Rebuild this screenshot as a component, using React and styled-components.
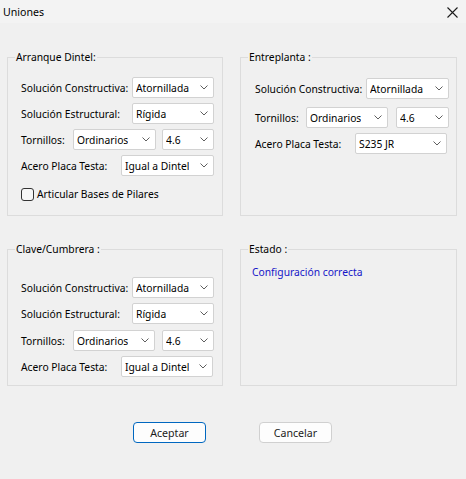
import React from 'react';
import styled, { createGlobalStyle } from 'styled-components';

const GlobalStyle = createGlobalStyle`
    html, body {
        margin: 0;
        padding: 0;
        background: #f0f0f0;
    }
    body {
        font-family: "Noto Sans", "Open Sans", sans-serif;
        font-size: 10.3px;
        color: #000;
    }
`

const App = () => {
    return (<Window>
        <GlobalStyle />
        <TitleBar>
            <Title>Uniones</Title>
            <CloseButton>
                <svg width="11" height="11" viewBox="0 0 11 11">
                    <path d="M0.5 0.5 L10.5 10.5 M10.5 0.5 L0.5 10.5" stroke="#1b1b1b" strokeWidth="1.1" fill="none"/>
                </svg>
            </CloseButton>
        </TitleBar>

        <Body>
            <Group $h={167} $pad={13} $pt={12}>
                <Legend $pad={13}>Arranque Dintel:</Legend>
                <Stack>
                    <Row>
                        <Label $w={111}>Solución Constructiva:</Label>
                        <Combo value="Atornillada" $w={82} />
                    </Row>
                    <Row>
                        <Label $w={111}>Solución Estructural:</Label>
                        <Combo value="Rígida" $w={82} />
                    </Row>
                    <Row>
                        <Label $w={52}>Tornillos:</Label>
                        <Combo value="Ordinarios" $w={83} />
                        <Combo value="4.6" $w={52} $ml={6} />
                    </Row>
                    <Row>
                        <Label $w={100}>Acero Placa Testa:</Label>
                        <Combo value="Igual a Dintel" $w={93} />
                    </Row>
                    <CheckRow>
                        <CheckBox />
                        <span>Articular Bases de Pilares</span>
                    </CheckRow>
                </Stack>
            </Group>

            <Group $h={167} $pad={14} $pt={13}>
                <Legend $pad={14}>Entreplanta :</Legend>
                <Stack>
                    <Row>
                        <Label $w={111}>Solución Constructiva:</Label>
                        <Combo value="Atornillada" $w={83} />
                    </Row>
                    <Row $mt={3}>
                        <Label $w={51}>Tornillos:</Label>
                        <Combo value="Ordinarios" $w={82} />
                        <Combo value="4.6" $w={53} $ml={8} />
                    </Row>
                    <Row>
                        <Label $w={100}>Acero Placa Testa:</Label>
                        <Combo value="S235 JR" $w={92} />
                    </Row>
                </Stack>
            </Group>

            <Group $h={145} $pad={13} $pt={20}>
                <Legend $pad={13}>Clave/Cumbrera :</Legend>
                <Stack>
                    <Row>
                        <Label $w={111}>Solución Constructiva:</Label>
                        <Combo value="Atornillada" $w={82} />
                    </Row>
                    <Row>
                        <Label $w={111}>Solución Estructural:</Label>
                        <Combo value="Rígida" $w={82} />
                    </Row>
                    <Row $mt={1}>
                        <Label $w={52}>Tornillos:</Label>
                        <Combo value="Ordinarios" $w={82} />
                        <Combo value="4.6" $w={52} $ml={7} />
                    </Row>
                    <Row>
                        <Label $w={100}>Acero Placa Testa:</Label>
                        <Combo value="Igual a Dintel" $w={92} />
                    </Row>
                </Stack>
            </Group>

            <Group $h={145} $pad={11} $pt={7}>
                <Legend $pad={11}>Estado :</Legend>
                <Status>Configuración correcta</Status>
            </Group>
        </Body>

        <ButtonBar>
            <Button $primary>Aceptar</Button>
            <Button>Cancelar</Button>
        </ButtonBar>
    </Window>);
}

//combobox look-alike: white box, value on the left, thin chevron on the right
const Combo = ({ value, $w, $ml }) => {
    return (<ComboBox $w={$w} $ml={$ml}>
        <ComboValue>{value}</ComboValue>
        <svg width="8" height="5" viewBox="0 0 8 5">
            <path d="M0.5 0.5 L4 4 L7.5 0.5" stroke="#5f5f5f" strokeWidth="1" fill="none"/>
        </svg>
    </ComboBox>);
}

export default App;

const Window = styled.div`
    width: 466px;
    height: 479px;
    background: #f0f0f0;
    display: flex;
    flex-direction: column;
    overflow: hidden;
`

const TitleBar = styled.div`
    height: 23px;
    background: #f3f3f3;
    display: flex;
    align-items: center;
    justify-content: space-between;
`

const Title = styled.div`
    padding-left: 3px;
    font-size: 10.6px;
    line-height: 16px;
    color: #000;
`

const CloseButton = styled.div`
    display: flex;
    align-items: center;
    margin-right: 8px;
    margin-top: 1px;
`

const Body = styled.div`
    display: grid;
    grid-template-columns: 216px 217px;
    column-gap: 17px;
    row-gap: 25px;
    padding: 26px 0 0 7px;
`

const Group = styled.fieldset`
    margin: 0;
    min-width: 0;
    box-sizing: border-box;
    height: ${props => props.$h}px;
    border: 1px solid #dcdcdc;
    padding: ${props => props.$pt}px 0 0 ${props => props.$pad}px;
`

const Legend = styled.legend`
    padding: 0 1px;
    margin-left: ${props => 7 - props.$pad}px;
    line-height: 16px;
    color: #000;
`

const Stack = styled.div`
    display: flex;
    flex-direction: column;
    gap: 5px;
`

const Row = styled.div`
    display: flex;
    align-items: center;
    height: 21px;
    margin-top: ${props => props.$mt || 0}px;
`

const Label = styled.div`
    width: ${props => props.$w}px;
    flex: none;
    white-space: nowrap;
`

const ComboBox = styled.div`
    box-sizing: border-box;
    width: ${props => props.$w}px;
    margin-left: ${props => props.$ml || 0}px;
    height: 21px;
    flex: none;
    background: #ffffff;
    border: 1px solid #d2d2d2;
    border-radius: 2px;
    display: flex;
    align-items: center;
    justify-content: space-between;
    padding: 0 5px 0 3px;
`

const ComboValue = styled.span`
    white-space: nowrap;
    overflow: hidden;
`

const CheckRow = styled.div`
    display: flex;
    align-items: center;
    gap: 3px;
    margin-top: 5px;
    height: 16px;
`

const CheckBox = styled.div`
    box-sizing: border-box;
    width: 13px;
    height: 13px;
    border: 1px solid #333333;
    border-radius: 3px;
    background: #f7f7f7;
`

const Status = styled.div`
    color: #1515c8;
    line-height: 16px;
`

const ButtonBar = styled.div`
    display: flex;
    justify-content: center;
    gap: 53px;
    margin-top: 36px;
    padding-right: 1px;
`

const Button = styled.div`
    box-sizing: border-box;
    width: 73px;
    height: 21px;
    display: flex;
    align-items: center;
    justify-content: center;
    background: #fdfdfd;
    border: 1px solid ${props => props.$primary ? '#0067c0' : '#d0d0d0'};
    border-radius: 4px;
    font-size: 10.6px;
    color: #1b1b1b;
`
